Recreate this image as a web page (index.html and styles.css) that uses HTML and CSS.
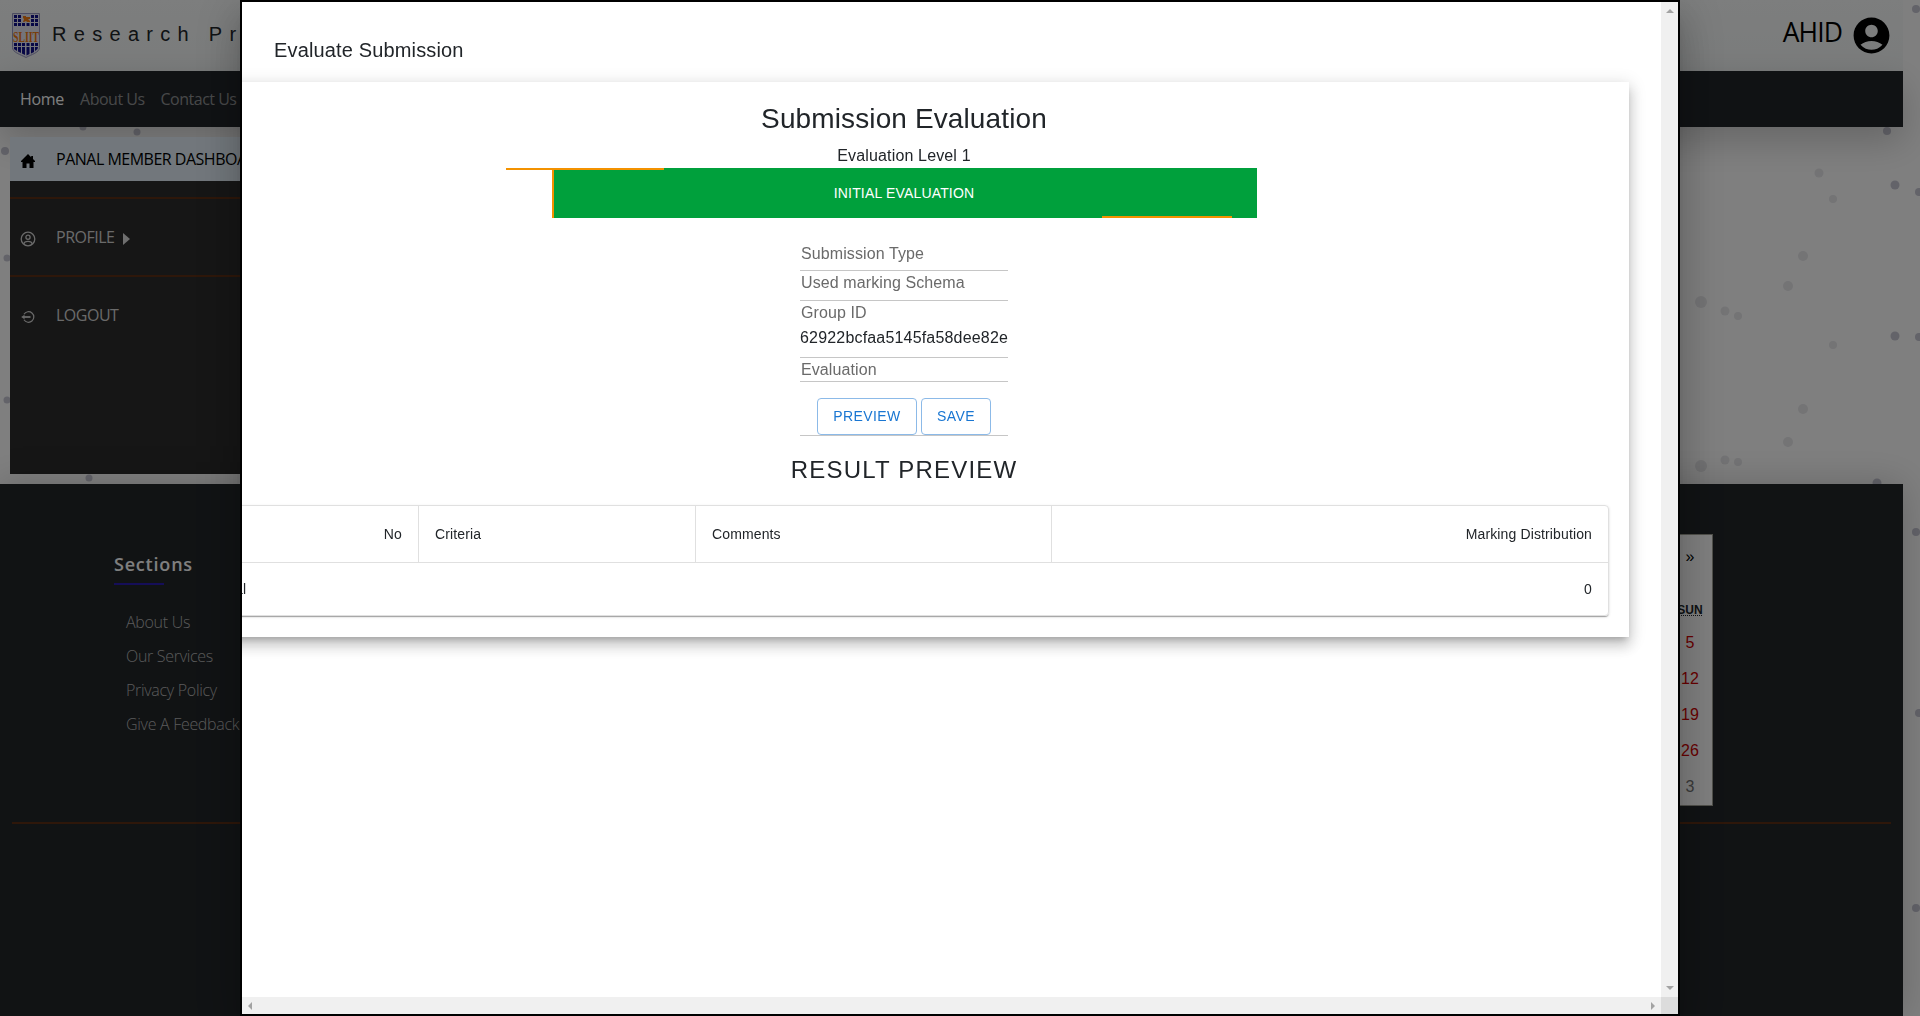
FILE: index.html
```html
<!DOCTYPE html>
<html lang="en">
<head>
<meta charset="utf-8">
<title>Evaluate Submission</title>
<link rel="stylesheet" href="styles.css">
</head>
<body>
<svg class="particles" width="1920" height="1016" aria-hidden="true">
  <g fill="#c6c6d3">
    <circle cx="1916" cy="9" r="4"/><circle cx="1895" cy="185" r="4.5"/><circle cx="1919" cy="192" r="4"/>
    <circle cx="1895" cy="336" r="4.5"/><circle cx="1919" cy="337" r="4"/><circle cx="1877" cy="483" r="4.5"/>
    <circle cx="1916" cy="532" r="4"/><circle cx="1919" cy="713" r="4"/><circle cx="1916" cy="908" r="4"/>
    <circle cx="83" cy="127" r="3.500"/><circle cx="137" cy="132" r="3.500"/><circle cx="5" cy="151" r="4"/>
    <circle cx="7" cy="258" r="3.500"/><circle cx="7" cy="400" r="3.500"/><circle cx="89" cy="478" r="3.500"/>
    <circle cx="1887" cy="131" r="4"/>
  </g>
  <g fill="#e8e8eb">
    <circle cx="1819" cy="173" r="4.5"/><circle cx="1833" cy="199" r="4"/><circle cx="1803" cy="256" r="5"/>
    <circle cx="1788" cy="286" r="5"/><circle cx="1701" cy="302" r="6"/><circle cx="1725" cy="311" r="4.5"/>
    <circle cx="1738" cy="316" r="4"/><circle cx="1833" cy="345" r="4"/><circle cx="1803" cy="409" r="5"/>
    <circle cx="1788" cy="442" r="5"/><circle cx="1701" cy="466" r="6"/><circle cx="1725" cy="460" r="4.5"/>
    <circle cx="1738" cy="462" r="4"/>
  </g>
</svg>

<div class="page">
  <header class="topbar">
    <svg class="crest" width="28" height="45" viewBox="0 0 28 45">
      <path d="M.5.5h27v34c0 5-8 7-13.500 10C8.500 41.500.5 39.500.5 34.500z" fill="#e8e8f4" stroke="#9a9ac4"/>
      <g fill="#10108c">
        <path d="M2 2h3v3H2zM6 2h3v3H6zM19 2h3v3h-3zM23 2h3v3h-3zM2 6h3v3H2zM6 6h3v3H6zM19 6h3v3h-3zM23 6h3v3h-3zM2 10h3v3H2zM6 10h3v3H6zM10 10h3v3h-3zM14.500 10h3v3h-3zM19 10h3v3h-3zM23 10h3v3h-3z"/>
        <path d="M2 30h3v3H2zM6 30h3v3H6zM10 30h3v3h-3zM14.500 30h3v3h-3zM19 30h3v3h-3zM23 30h3v3h-3zM2 34h3v4l-3-2zM6 34h3v6l-3-1.500zM10 34h3v8l-3-1.500zM14.500 34h3v7l-3 1.500zM19 34h3v5l-3 1.500zM23 34h3l-.5 2-2.500 2z"/>
      </g>
      <path d="M11 3h3v1h4v2h-2l2 2v1h-3l-1-1-2 1h-1l1-3-1-1z" fill="#f07a10"/>
      <text x="1" y="28.500" textLength="26" lengthAdjust="spacingAndGlyphs" class="crest-text">SLIIT</text>
    </svg>
    <span class="brand">Research Project Management</span>
    <div class="user">
      <span>AHID</span>
      <svg width="43" height="43" viewBox="0 0 24 24"><path d="M12 2C6.480 2 2 6.480 2 12s4.480 10 10 10 10-4.480 10-10S17.520 2 12 2zm0 4c1.930 0 3.500 1.570 3.500 3.500S13.930 13 12 13s-3.500-1.570-3.500-3.500S10.070 6 12 6zm0 14c-2.030 0-4.430-.82-6.140-2.880C7.550 15.800 9.680 15 12 15s4.450.8 6.140 2.120C16.430 19.180 14.030 20 12 20z"/></svg>
    </div>
  </header>
  <nav class="navbar">
    <a class="active">Home</a><a>About Us</a><a>Contact Us</a>
  </nav>
  <main class="content">
    <aside class="sidebar">
      <div class="side-item current">
        <svg width="16" height="16" viewBox="0 0 16 16"><path d="M8 1 1 8v1h1.500v6H6.500v-4.500h3V15h4V9H15V8l-2-2V3h-1.800v1.200z"/></svg>
        <span>PANAL MEMBER DASHBOARD</span>
      </div>
      <hr>
      <div class="side-item">
        <svg width="16" height="16" viewBox="0 0 16 16" fill="none" stroke="currentColor" stroke-width="1.300"><circle cx="8" cy="8" r="6.800"/><circle cx="8" cy="6.200" r="2.100"/><path d="M3.800 13c.7-3.500 7.700-3.500 8.400 0"/></svg>
        <span>PROFILE</span><i class="caret"></i>
      </div>
      <hr>
      <div class="side-item">
        <svg width="16" height="16" viewBox="0 0 16 16" fill="none" stroke="currentColor" stroke-width="1.200"><path d="M4 5.200a5.300 5.300 0 1 1 0 5.600"/><path d="M3 8h7.500" stroke-width="1.800"/><path d="M4.500 5.800v4.400L1.200 8z" fill="currentColor" stroke="none"/></svg>
        <span>LOGOUT</span>
      </div>
    </aside>
  </main>
  <footer class="footer">
    <div class="footer-main">
      <section class="links">
        <h2>Sections</h2>
        <a>About Us</a><a>Our Services</a><a>Privacy Policy</a><a>Give A Feedback</a>
      </section>
      <div class="calendar">
        <span class="next">»</span>
        <abbr>SUN</abbr>
        <span class="day">5</span><span class="day">12</span><span class="day">19</span><span class="day">26</span><span class="day other">3</span>
      </div>
    </div>
    <hr>
  </footer>
</div>

<div class="backdrop">
  <div class="modal">
    <div class="view">
      <h6 class="modal-title">Evaluate Submission</h6>
      <div class="card">
        <h1>Submission Evaluation</h1>
        <p class="level">Evaluation Level 1</p>
        <div class="stage">INITIAL EVALUATION<i class="edge edge-top"></i><i class="edge edge-left"></i><i class="edge edge-bottom"></i></div>
        <div class="fields">
          <div class="field type">Submission Type</div>
          <div class="field schema">Used marking Schema</div>
          <div class="field group">Group ID<b>62922bcfaa5145fa58dee82e</b></div>
          <div class="field eval">Evaluation</div>
          <div class="actions"><button>PREVIEW</button><button class="save">SAVE</button></div>
        </div>
        <h2>RESULT PREVIEW</h2>
        <div class="table">
          <div class="row head"><span class="num">No</span><span>Criteria</span><span>Comments</span><span class="num">Marking Distribution</span></div>
          <div class="row total"><span>Total</span><span>0</span></div>
        </div>
      </div>
    </div>
    <div class="vbar"><i class="up"></i><i class="down"></i></div>
    <div class="hbar"><i class="left"></i><i class="right"></i></div>
    <div class="corner"></div>
  </div>
</div>
</body>
</html>
```
FILE: styles.css
```css
* { box-sizing: border-box; }
body { margin: 0; height: 1016px; overflow: hidden; background: #fff; font-family: "Open Sans", sans-serif; font-size: 16px; }
h1, h2, h6, p { margin: 0; font-weight: 400; }
hr { margin: 0; border: 0; height: 2px; background: #5c2e14; }
svg { flex: none; }
.particles { position: absolute; left: 0; top: 0; }
.page { position: relative; width: 1903px; height: 1016px; display: flex; flex-direction: column; }

.topbar { height: 71px; flex: none; display: flex; align-items: center; padding: 0 10px 0 12px; background: linear-gradient(#fafcfc, #f5f8f8); }
.crest-text { font: bold 15px "Liberation Serif", serif; fill: #f07a10; }
.brand { margin: -2px 0 0 12px; font: 20px "Liberation Sans", sans-serif; letter-spacing: 7.3px; white-space: nowrap; color: #212529; }
.user { margin: -1px 0 0 auto; display: flex; align-items: center; gap: 8px; font-size: 26.5px; letter-spacing: -.9px; }
.user span { margin-top: -7px; }

.navbar { height: 56px; flex: none; display: flex; align-items: center; gap: 16px; padding: 0 20px 1px; background: #212529; color: #8f9193; letter-spacing: -.5px; box-shadow: 0 14px 36px rgba(0,0,0,.2); }
.navbar .active { color: #fff; letter-spacing: -.3px; }

.content { height: 357px; flex: none; padding: 10px; }
.sidebar { width: 300px; height: 337px; background: #2c2c2c; }
.side-item { height: 76px; display: flex; align-items: center; gap: 20px; padding: 0 10px; color: #d5d5d5; letter-spacing: -.5px; white-space: nowrap; }
.side-item svg { margin-top: 4px; }
.side-item span { margin-top: -1px; }
.side-item.current { height: 44px; margin-bottom: 16px; background: #e4eff8; color: #000; }
.caret { margin: 3px 0 0 -11px; border: 6px solid transparent; border-left: 7px solid #dedede; border-right: 0; }

.footer { flex: 1; background: #222629; box-shadow: 0 0 36px rgba(0,0,0,.2); }
.footer-main { height: 338px; display: flex; justify-content: space-between; padding: 50px 190px 0 114px; }
.footer hr { margin: 0 12px; }
.links { display: flex; flex-direction: column; padding-top: 14px; }
.links h2 { font-size: 18px; line-height: 32px; font-weight: 600; letter-spacing: .8px; color: #fff; margin-bottom: 20px; }
.links h2::after { content: ""; display: block; width: 50px; height: 2px; margin-top: 3px; background: #2a1cb0; }
.links a { padding-left: 12px; font-weight: 300; line-height: 34px; letter-spacing: -.3px; color: #b4b4b4; }
.calendar { width: 350px; height: 272px; background: #fff; border: 1px solid #a0a096; display: flex; flex-direction: column; align-items: flex-end; font-family: "Liberation Sans", sans-serif; }
.calendar > * { width: 44px; text-align: center; }
.next { line-height: 44px; height: 58px; }
.calendar abbr { font-size: 12px; font-weight: 700; line-height: 34px; height: 32px; text-decoration: underline dotted; color: #212529; }
.day { line-height: 36px; color: #d10000; }
.day.other { color: #757575; }

.backdrop { position: fixed; inset: 0; background: rgba(0,0,0,.5); }
.modal { margin: 0 auto; width: 1440px; height: 1016px; border: 2px solid #000; display: grid; grid-template: 1fr 17px / 1fr 17px; background: #fff; color: #212529; font-family: "Liberation Sans", sans-serif; box-shadow: 0 11px 15px -7px rgba(0,0,0,.2), 0 24px 38px 3px rgba(0,0,0,.14), 0 9px 46px 8px rgba(0,0,0,.12); }
.view { overflow: hidden; min-width: 0; }
.modal-title { height: 80px; padding: 35px 32px 0; font-size: 20px; line-height: 26px; letter-spacing: .15px; }
.card { width: 1450px; height: 555px; margin-left: -63px; padding: 0 20px; display: flex; flex-direction: column; align-items: center; box-shadow: 0 5px 6px -3px rgba(0,0,0,.2), 0 9px 12px 1px rgba(0,0,0,.14), 0 3px 16px 2px rgba(0,0,0,.12); }
.card h1 { margin-top: 17px; font-size: 28px; line-height: 40px; letter-spacing: .12px; }
.level { margin-top: 5px; line-height: 24px; letter-spacing: .15px; }
.stage { position: relative; width: 705px; height: 50px; line-height: 50px; text-align: center; font-size: 14px; letter-spacing: .17px; background: #00a03c; color: #fff; }
.edge { position: absolute; background: #f39200; }
.edge-top { left: -46px; top: 0; width: 158px; height: 2px; }
.edge-left { left: 0; top: 2px; width: 2px; height: 48px; }
.edge-bottom { right: 25px; bottom: 0; width: 130px; height: 2px; }
.fields { width: 208px; margin-top: 22px; color: #6a6a6a; }
.field { padding-left: 1px; line-height: 20px; border-bottom: 1px solid #c6c6c6; letter-spacing: .1px; white-space: nowrap; }
.field b { display: block; margin: 5px 0 0 -1px; font-weight: 400; letter-spacing: .18px; color: #212529; }
.type { height: 31px; padding-top: 4px; }
.schema { height: 30px; padding-top: 2px; }
.group { height: 57px; padding-top: 2px; }
.eval { height: 24px; padding-top: 2px; }
.actions { height: 54px; padding-top: 16px; display: flex; justify-content: center; gap: 4px; border-bottom: 1px solid #c6c6c6; }
button { width: 100px; height: 37px; padding: 0 0 2px; border: 1px solid #8cbae8; border-radius: 4px; background: #fff; color: #1976d2; font: 14px "Liberation Sans", sans-serif; letter-spacing: .4px; }
.save { width: 70px; }
.card h2 { margin-top: 18px; font-size: 24px; line-height: 32px; letter-spacing: 1.2px; }
.table { width: 1410px; height: 111px; margin-top: 19px; border: 1px solid #e0e0e0; border-radius: 4px; font-size: 14px; box-shadow: 0 2px 1px -1px rgba(0,0,0,.2), 0 1px 1px rgba(0,0,0,.14), 0 1px 3px rgba(0,0,0,.12); }
.row { display: grid; letter-spacing: .13px; }
.row span { padding: 0 16px; }
.head { grid-template-columns: 218px 277px 356px 1fr; line-height: 56px; border-bottom: 1px solid #e0e0e0; }
.head span + span { border-left: 1px solid #e0e0e0; }
.num { text-align: right; }
.total { grid-template-columns: 1fr auto; line-height: 53px; }

.vbar, .hbar { display: flex; justify-content: space-between; align-items: center; background: #f0f0f0; }
.vbar { flex-direction: column; padding: 7px 0; }
.hbar { padding: 0 6px; }
.corner { background: #dcdcdc; }
.vbar i, .hbar i { border: 4px solid transparent; }
.vbar .up { border-top: 0; border-bottom-color: #a3a3a3; }
.vbar .down { border-bottom: 0; border-top-color: #a3a3a3; }
.hbar .left { border-left: 0; border-right-color: #a3a3a3; }
.hbar .right { border-right: 0; border-left-color: #a3a3a3; }
```
